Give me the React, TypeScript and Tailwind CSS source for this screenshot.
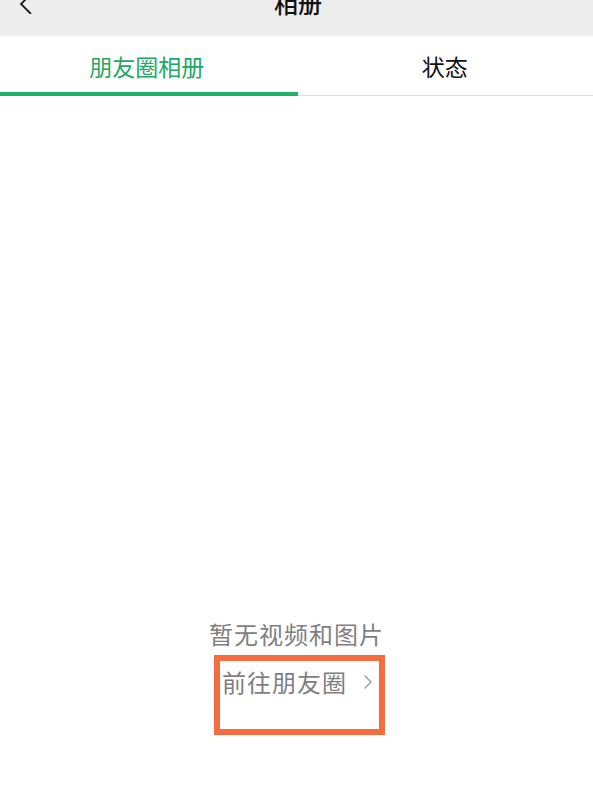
import React from "react";

export default function App() {
  return (
    <div
      className="w-[593px] h-[787px] bg-white overflow-hidden flex flex-col"
      style={{ fontFamily: '"Noto Sans CJK SC", "Noto Sans", sans-serif' }}
    >
      <div className="h-[36px] bg-[#ededed] flex items-start justify-center relative overflow-hidden">
        <svg className="absolute left-[17px] top-[-6px]" width="20" height="20" viewBox="0 0 20 20" fill="none">
          <path d="M14 0 L4 10 L14 20" stroke="#1a1a1a" strokeWidth="1.8" />
        </svg>
        <div className="text-[24px] leading-[30px] font-medium text-[#111] mt-[-12px] ml-[3px]">相册</div>
      </div>
      <div className="flex h-[60px] border-b border-[#dcdcdc]">
        <div className="flex-1 flex flex-col items-center justify-end relative">
          <div className="text-[23px] leading-[30px] text-[#23a865] mb-[14px] ml-[-3px]">朋友圈相册</div>
          <div className="absolute left-0 right-[-1px] bottom-[-1px] h-[4px] bg-[#1db468]" />
        </div>
        <div className="flex-1 flex flex-col items-center justify-end">
          <div className="text-[23px] leading-[30px] text-[#111] mb-[14px]">状态</div>
        </div>
      </div>
      <div className="flex-1 flex flex-col items-center pt-[521px]">
        <div className="text-[24px] leading-[34px] text-[#7f7f7f] tracking-[1px]">暂无视频和图片</div>
        <div className="mt-[4px] w-[171px] h-[80px] border-[6px] border-[#f56c40] flex items-start ml-[6px]">
          <div className="flex items-center mt-[6px] ml-[2px]">
            <span className="text-[24px] leading-[30px] text-[#7f7f7f] tracking-[1px]">前往朋友圈</span>
            <svg className="ml-[16px]" width="10" height="16" viewBox="0 0 10 16" fill="none">
              <path d="M1.5 1.5 L8 8 L1.5 14.5" stroke="#9a9a9a" strokeWidth="1.4" />
            </svg>
          </div>
        </div>
      </div>
    </div>
  );
}
